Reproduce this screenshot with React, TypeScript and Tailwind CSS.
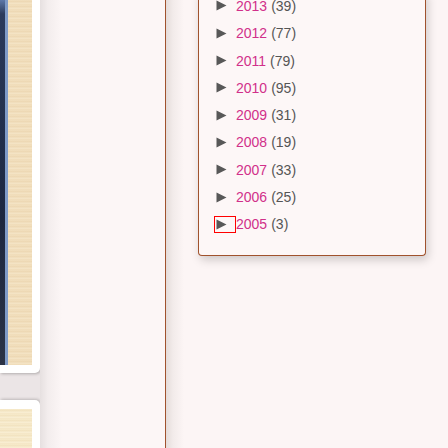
import React from 'react';

const years = [
  { year: 2013, count: 39 },
  { year: 2012, count: 77 },
  { year: 2011, count: 79 },
  { year: 2010, count: 95 },
  { year: 2009, count: 31 },
  { year: 2008, count: 19 },
  { year: 2007, count: 33 },
  { year: 2006, count: 25 },
  { year: 2005, count: 3 },
];

function Arrow() {
  return (
    <svg width="11" height="11" viewBox="0 0 11 11" className="block">
      <polygon points="0.5,0.5 10.5,5.5 0.5,10.5" fill="#585858" />
    </svg>
  );
}

export default function App() {
  return (
    <div className="flex h-[448px] w-[448px] overflow-hidden bg-[#fcf5f5] font-['Liberation_Sans',Arial,sans-serif]">
      {/* photo strip */}
      <div className="flex w-[40px] shrink-0 flex-col bg-[#ebe5e6]">
        <div className="h-[373px] rounded-br-[5px] bg-white pr-2 pb-2 shadow-[1px_1px_3px_rgba(0,0,0,0.25)]">
          <div className="flex h-full w-[32px]">
            <div className="h-full w-[5px] bg-[linear-gradient(to_bottom,#5d78a8_0px,#2a3a5c_14px,#1c2740_60%,#2b3346_100%)]" />
            <div className="h-full w-[3px] bg-[#7f9bc8]" />
            <div className="h-full flex-1 bg-[repeating-linear-gradient(to_bottom,#f2e0bf_0px,#ecd6b1_2px,#f5e6c9_3px,#efdab6_5px)]" />
          </div>
        </div>
        <div className="mt-[27px] flex-1 rounded-tr-[5px] bg-white pt-[9px] pr-2 shadow-[1px_-1px_3px_rgba(0,0,0,0.2)]">
          <div className="h-full w-[32px] bg-[repeating-linear-gradient(to_bottom,#f7ebcc_0px,#f1e1bd_2px,#faf0d6_3px,#f3e4c2_5px)]" />
        </div>
      </div>

      {/* sidebar */}
      <div className="w-[126px] shrink-0 border-r border-[#a0522d] bg-[linear-gradient(to_right,#e6e0e0_0px,#f3eded_8px,#fcf6f6_22px)]" />

      {/* main */}
      <div className="relative flex-1 bg-[linear-gradient(to_right,#e4dcda_0px,#f2ebea_7px,#fcf5f5_18px)]">
        <div className="ml-[32px] w-[228px] rounded-b-[4px] border-x border-b border-[#a0522d] bg-[#fdf7f7] pb-[17px] pl-[16px] shadow-[2px_4px_10px_rgba(0,0,0,0.18)]">
          <ul className="-mt-[7.7px]">
            {years.map((y, i) => (
              <li key={y.year} className="flex h-[27.3px] items-center text-[14px] leading-none">
                <span
                  className={
                    'flex h-[15px] w-[20px] items-center pl-[1px] ' +
                    (i === years.length - 1 ? 'outline outline-1 outline-[#ff0000]' : '')
                  }
                >
                  <Arrow />
                </span>
                <span className="ml-[1px] text-[#d1308a]">{y.year}</span>
                <span className="ml-[4px] text-[#555555]">({y.count})</span>
              </li>
            ))}
          </ul>
        </div>
      </div>
    </div>
  );
}
